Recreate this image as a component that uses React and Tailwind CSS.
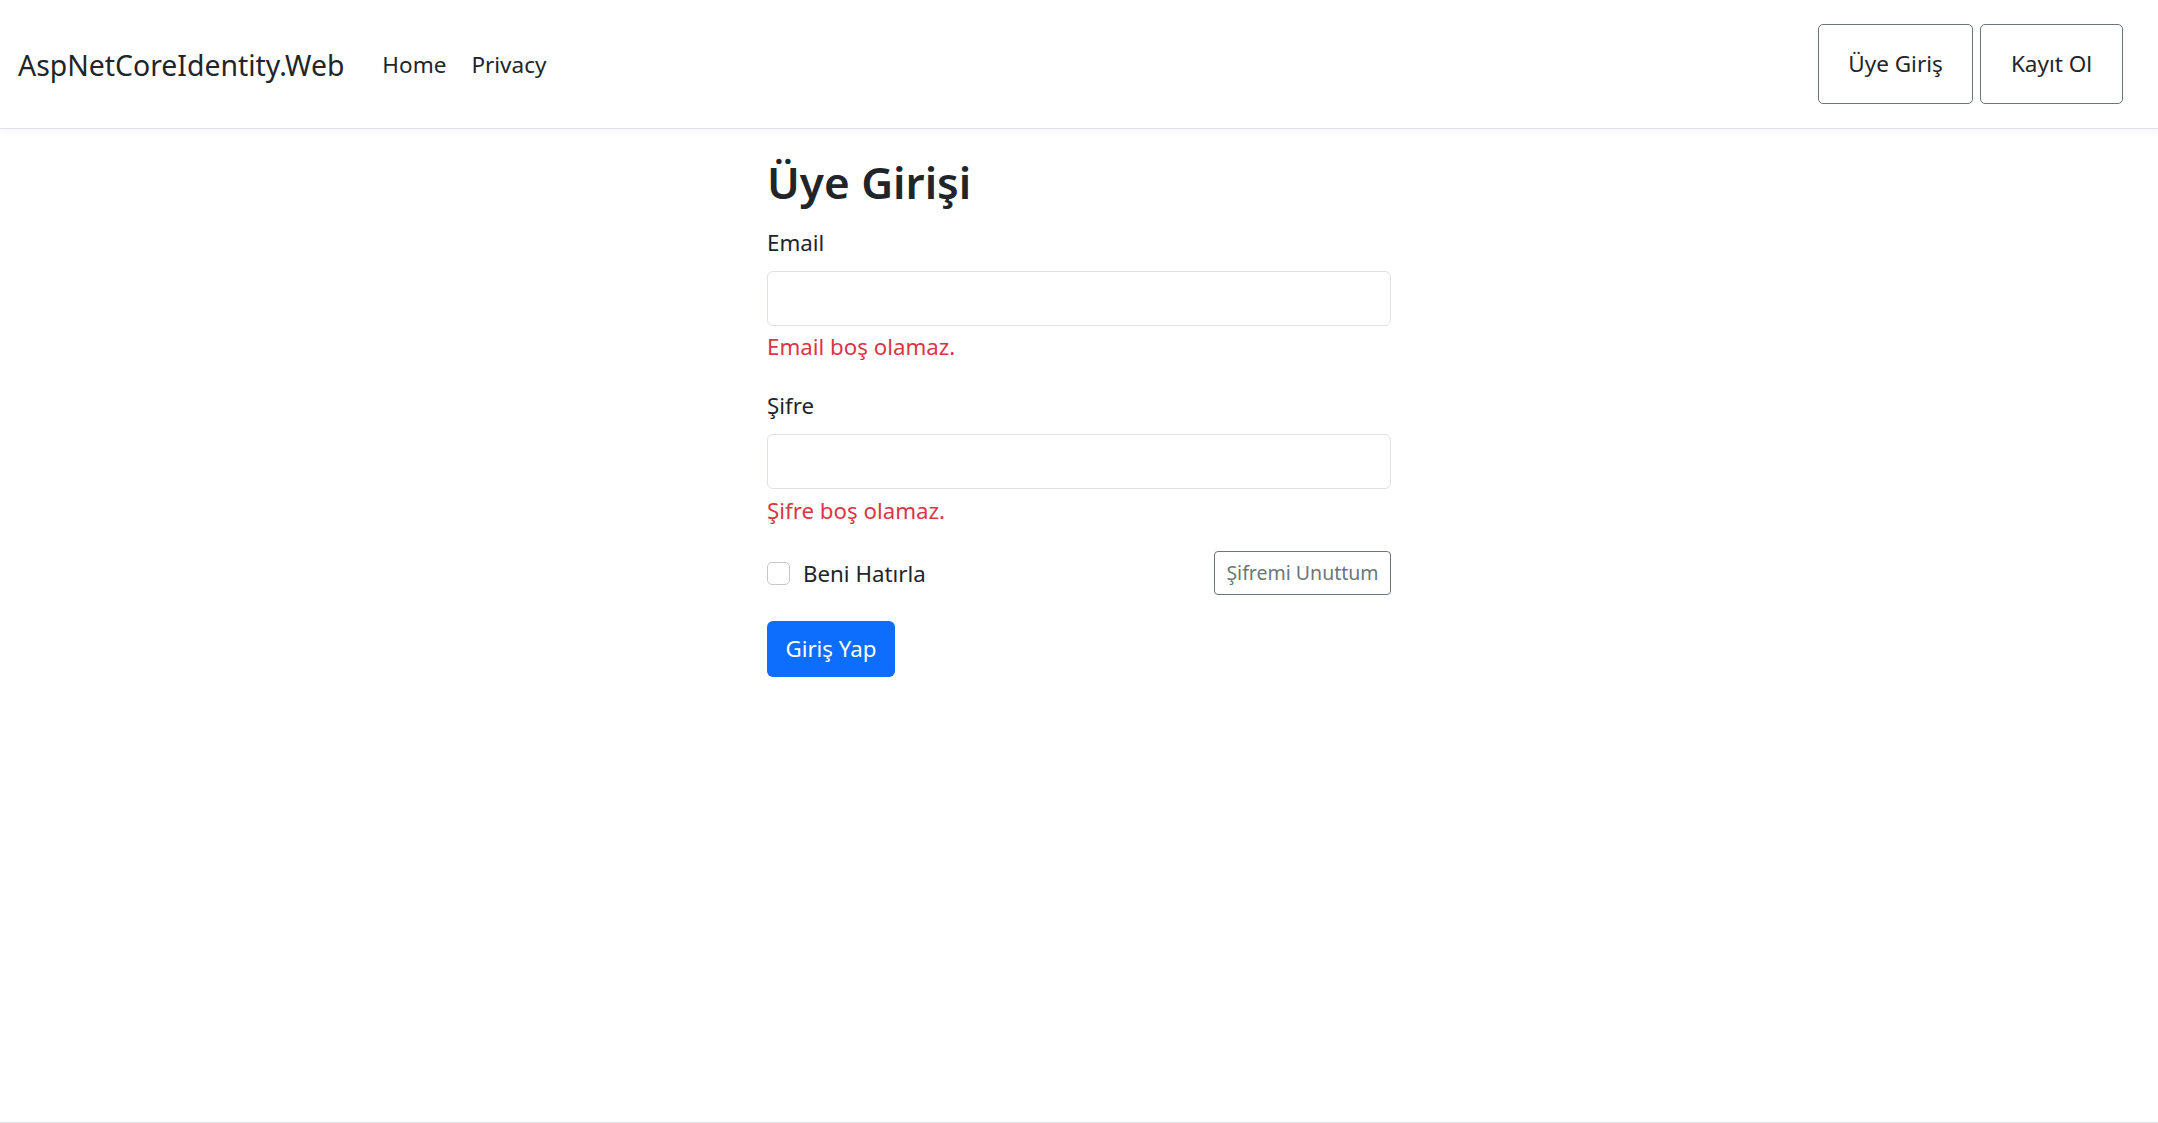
import React from 'react';

const font = { fontFamily: '"Noto Sans", "Open Sans", sans-serif' };

const NavBar = () => (
  <nav className="h-[129px] flex items-center justify-between pl-[18px] border-b border-[#dee2e6] shadow-[0_3px_6px_rgba(0,0,0,0.04)] bg-white">
    <div className="flex items-center pt-[2px]">
      <a className="text-[28.4px] text-[#212529] mr-[38px]">AspNetCoreIdentity.Web</a>
      <a className="text-[22.5px] text-[#212529] mr-[25px]">Home</a>
      <a className="text-[22.5px] text-[#212529]">Privacy</a>
    </div>
    <div className="flex items-center gap-[7px] mr-[35px]">
      <button className="h-[80px] w-[155px] border border-[#6c757d] rounded-[5px] text-[22.5px] text-[#212529]">Üye Giriş</button>
      <button className="h-[80px] w-[143px] border border-[#6c757d] rounded-[5px] text-[22.5px] text-[#212529]">Kayıt Ol</button>
    </div>
  </nav>
);

export default function App() {
  return (
    <div style={font} className="min-h-[1123px] bg-white text-[#212529] flex flex-col">
      <NavBar />
      <main className="flex-1">
        <div className="mx-auto w-[624px] pt-[27px]">
          <h2 className="text-[44px] font-semibold leading-[53px] mb-[17px]">Üye Girişi</h2>
          <label className="block text-[22.3px] leading-[33px] mb-[12px]">Email</label>
          <input className="block w-full h-[55px] border border-[#dee2e6] rounded-[6px]" />
          <div className="text-[22.3px] leading-[33px] text-[#dc3545] mt-[4px]">Email boş olamaz.</div>
          <label className="block text-[22.3px] leading-[33px] mt-[26px] mb-[12px]">Şifre</label>
          <input type="password" className="block w-full h-[55px] border border-[#dee2e6] rounded-[6px]" />
          <div className="text-[22.3px] leading-[33px] text-[#dc3545] mt-[5px]">Şifre boş olamaz.</div>
          <div className="flex items-center justify-between mt-[24px] h-[44px]">
            <label className="flex items-center gap-[13px] text-[22.3px] leading-[33px]">
              <span className="w-[23px] h-[23px] border border-[#c4c8cc] rounded-[5px] bg-white inline-block" />
              Beni Hatırla
            </label>
            <button className="h-[44px] w-[177px] border border-[#6c757d] rounded-[4px] text-[19.5px] text-[#6c757d]">Şifremi Unuttum</button>
          </div>
          <button className="mt-[26px] h-[56px] w-[128px] bg-[#0d6efd] text-white text-[22.3px] rounded-[6px]">Giriş Yap</button>
        </div>
      </main>
      <footer className="border-t border-[#dee2e6] h-[1px]" />
    </div>
  );
}
